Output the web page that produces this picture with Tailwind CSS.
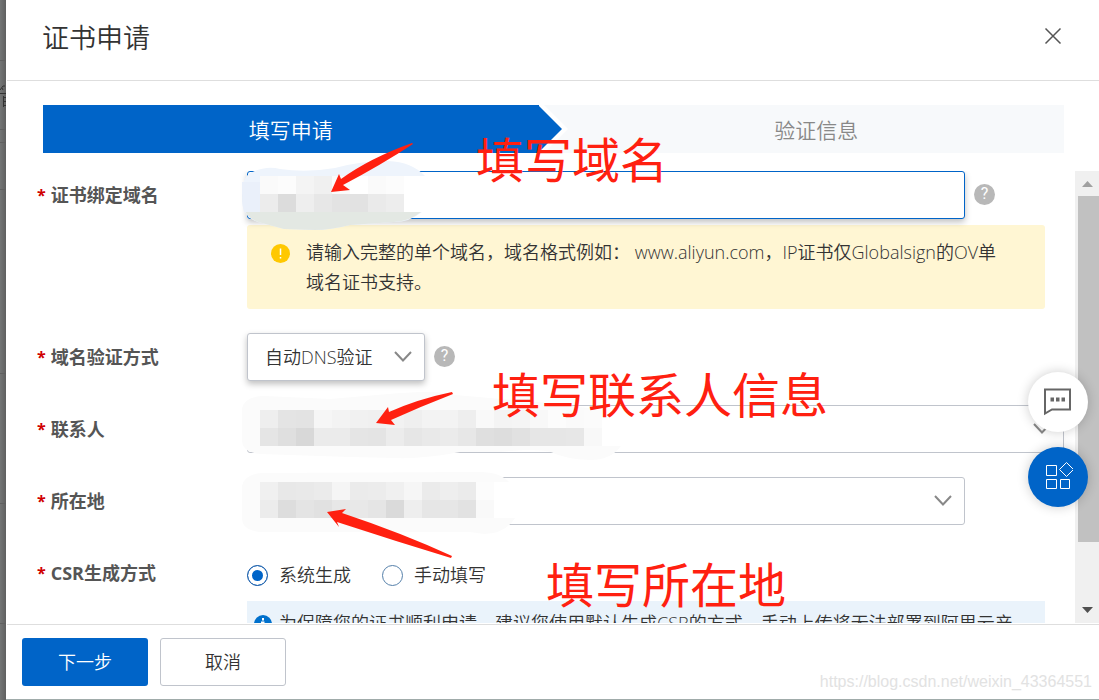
<!DOCTYPE html>
<html lang="zh-CN">
<head>
<meta charset="utf-8">
<title>证书申请</title>
<script src="https://cdn.jsdelivr.net/npm/@tailwindcss/browser@4"></script>
</head>
<body class="relative flex h-screen overflow-hidden bg-[#707272] font-['Open_Sans','Noto_Sans_CJK_SC',sans-serif] text-lg font-[350] text-[#333]">

<!-- dimmed page behind the dialog -->
<div class="relative w-1.5 shrink-0 overflow-hidden bg-linear-to-r from-[#737575] to-[#606060]" aria-hidden="true">
  <svg class="absolute inset-0" width="6" height="700" viewBox="0 0 6 700">
    <path d="M0 60.500H6M0 129.500H6M0 142.500H6M0 189.500H6M0 373.500H6M0 503.500H6M0 623.500H6" stroke="#606060" fill="none"/>
    <path d="M0 90L3 86L5 86M2 88L3 90M0 93.500H6M3.500 96V107M3 97.500H6M3 101.500H6M3 105.500H6" stroke="#333" fill="none"/>
  </svg>
</div>

<main class="relative flex min-w-0 flex-1 flex-col border-b border-[#a0abaa] bg-white" role="dialog" aria-labelledby="title">
  <header class="ml-px flex h-[81px] shrink-0 items-center justify-between border-b border-[#dedede] pr-9 pb-1 pl-[35px]">
    <h1 id="title" class="text-[27px] leading-9">证书申请</h1>
    <button type="button" aria-label="关闭" class="flex size-5 items-center justify-center pb-1">
      <svg class="size-[18px] shrink-0" viewBox="0 0 18 18" fill="none" stroke="#555" stroke-width="1.500"><path d="M1.500 1.500L16.500 16.500M16.500 1.500L1.500 16.500"/></svg>
    </button>
  </header>

  <ol class="mt-6 mr-[35px] mb-[18px] ml-[37px] flex h-12 shrink-0 text-[21px] leading-[50px]">
    <li class="relative flex-1 bg-[#0064c8] text-center text-white">填写申请
      <svg class="absolute top-0 left-full" width="30" height="48" viewBox="0 0 30 48" aria-hidden="true"><path d="M0 0H5L29 24L5 48H0Z" fill="#fff"/><path d="M-1 0H-1L23 24L-1 48H-1Z" fill="#0064c8"/></svg>
    </li>
    <li class="flex-1 bg-[#f7f9fb] pl-[30px] text-center text-[#888]">验证信息</li>
  </ol>

  <div class="flex min-h-0 flex-1">
    <form class="flex min-w-0 flex-1 flex-col gap-6 overflow-hidden pr-[11px] pl-[31px]">
      <div class="flex shrink-0">
        <label for="domain" class="flex h-12 w-[210px] shrink-0 items-center gap-[5px] font-bold text-[#555]"><span class="text-base text-[#d00000]">*</span>证书绑定域名</label>
        <div class="min-w-0 flex-1">
          <div class="flex items-center">
            <input id="domain" type="text" class="h-12 min-w-0 flex-1 rounded-[3px] border border-[#0064c8] bg-white px-4 shadow-[0_3px_6px_rgba(0,0,0,0.25)] outline-none">
            <div class="w-[99px] shrink-0 pb-0.5 pl-[9px]"><button type="button" aria-label="域名帮助" class="flex size-[21px] items-center justify-center rounded-full bg-[#b8b8b8] font-[Roboto] text-base font-normal text-white">?</button></div>
          </div>
          <div class="mt-1.5 mr-[19px] flex gap-4 rounded-[3px] bg-[#fff6d3] py-3 pr-9 pl-6">
            <svg class="mt-[7px] size-[19px] shrink-0" viewBox="0 0 19 19" aria-hidden="true"><circle cx="9.500" cy="9.500" r="9.500" fill="#ffc800"/><path d="M9.500 4.500V11M9.500 13V14.500" stroke="#fff" stroke-width="1.500"/></svg>
            <p class="leading-[30px]">请输入完整的单个域名，域名格式例如： www.aliyun.com，IP证书仅Globalsign的OV单域名证书支持。</p>
          </div>
        </div>
      </div>

      <div class="flex h-12 shrink-0 items-center">
        <label for="method" class="flex w-[210px] shrink-0 items-center gap-[5px] font-bold text-[#555]"><span class="text-base text-[#d00000]">*</span>域名验证方式</label>
        <div class="relative">
          <select id="method" class="block h-12 w-[178px] appearance-none rounded-[3px] border border-[#c0c4cc] bg-white pl-[17px] shadow-[0_3px_6px_rgba(0,0,0,0.25)]"><option>自动DNS验证</option></select>
          <svg class="pointer-events-none absolute top-[18px] right-[13px]" width="18" height="12" viewBox="0 0 18 12" fill="none" stroke="#888" stroke-width="2"><path d="M1 1L9 9.500L17 1"/></svg>
        </div>
        <div class="pb-0.5 pl-[9px]"><button type="button" aria-label="验证方式帮助" class="flex size-[21px] items-center justify-center rounded-full bg-[#b8b8b8] font-[Roboto] text-base font-normal text-white">?</button></div>
      </div>

      <div class="flex h-12 shrink-0 items-center">
        <label for="contact" class="flex w-[210px] shrink-0 items-center gap-[5px] font-bold text-[#555]"><span class="text-base text-[#d00000]">*</span>联系人</label>
        <div class="relative flex-1">
          <select id="contact" class="block h-12 w-full appearance-none rounded-[3px] border border-[#c0c4cc] bg-white"><option></option></select>
          <svg class="pointer-events-none absolute top-[18px] right-[13px]" width="18" height="12" viewBox="0 0 18 12" fill="none" stroke="#888" stroke-width="2"><path d="M1 1L9 9.500L17 1"/></svg>
        </div>
      </div>

      <div class="flex h-12 shrink-0 items-center">
        <label for="place" class="flex w-[210px] shrink-0 items-center gap-[5px] font-bold text-[#555]"><span class="text-base text-[#d00000]">*</span>所在地</label>
        <div class="relative mr-[99px] flex-1">
          <select id="place" class="block h-12 w-full appearance-none rounded-[3px] border border-[#c0c4cc] bg-white"><option></option></select>
          <svg class="pointer-events-none absolute top-[18px] right-[13px]" width="18" height="12" viewBox="0 0 18 12" fill="none" stroke="#888" stroke-width="2"><path d="M1 1L9 9.500L17 1"/></svg>
        </div>
      </div>

      <fieldset class="flex shrink-0" aria-labelledby="csr">
        <div id="csr" class="flex h-12 w-[210px] shrink-0 items-center gap-[5px] font-bold text-[#555]"><span class="text-base text-[#d00000]">*</span>CSR生成方式</div>
        <div class="min-w-0 flex-1">
          <div class="flex h-12 items-center gap-[31px] pt-1">
            <label class="flex items-center gap-[11px]"><input type="radio" name="csr" checked class="size-[21px] appearance-none rounded-full border border-[#1a5ba5] bg-white checked:bg-[#0064c8] checked:shadow-[inset_0_0_0_4px_#fff]">系统生成</label>
            <label class="flex items-center gap-[11px]"><input type="radio" name="csr" class="size-[21px] appearance-none rounded-full border border-[#5580aa] bg-white checked:bg-[#0064c8] checked:shadow-[inset_0_0_0_4px_#fff]">手动填写</label>
          </div>
          <div class="mt-1 mr-[19px] flex gap-[7px] bg-[#eaf3fb] py-[7px] pr-5 pl-[7px]">
            <svg class="mt-[7px] size-[18px] shrink-0" viewBox="0 0 18 18" aria-hidden="true"><circle cx="9" cy="9" r="9" fill="#0070cc"/><path d="M9 3V5.500M7 7.500H9.500V14M6.500 14H12" stroke="#fff" stroke-width="2" fill="none"/></svg>
            <p class="leading-[30px]">为保障您的证书顺利申请，建议您使用默认生成CSR的方式，手动上传将无法部署到阿里云产品。</p>
          </div>
        </div>
      </fieldset>
    </form>

    <!-- scroll bar -->
    <div class="flex w-6 shrink-0 flex-col items-center bg-[#f0f0f0]" aria-hidden="true">
      <svg class="h-[25px] w-6 shrink-0" viewBox="0 0 24 25"><path d="M7 16L12.500 10L18 16Z" fill="#a0a0a0"/></svg>
      <div class="ml-0.5 w-[21px] flex-[347] bg-[#c1c1c1]"></div>
      <div class="flex-[56]"></div>
      <svg class="h-[25px] w-6 shrink-0" viewBox="0 0 24 25"><path d="M7 9L12.500 15L18 9Z" fill="#505050"/></svg>
    </div>
  </div>

  <footer class="mt-px ml-px flex h-[75px] shrink-0 items-center gap-3 border-t border-[#dedede] pl-[15px]">
    <button type="button" class="h-12 w-[126px] rounded-[3px] bg-[#0064c8] text-white">下一步</button>
    <button type="button" class="h-12 w-[126px] rounded-[3px] border border-[#c0c4cc] bg-white">取消</button>
  </footer>
</main>

<!-- floating tools -->
<div class="absolute top-[372px] right-[11px] flex flex-col gap-[15px]">
  <button type="button" aria-label="咨询" class="flex size-[60px] items-center justify-center rounded-full bg-white shadow-[0_0_12px_rgba(0,0,0,0.2)]">
    <svg width="30" height="30" viewBox="0 0 30 30" fill="none" stroke="#666" stroke-width="2"><path d="M2 2.500H27V22.500H9L2 26.500Z"/><path d="M7.500 12.500H11M13 12.500H16.500M18.500 12.500H22" stroke-width="4"/></svg>
  </button>
  <button type="button" aria-label="应用" class="flex size-[60px] items-center justify-center rounded-full bg-[#0064c8] shadow-[0_0_12px_rgba(0,0,0,0.2)]">
    <svg width="30" height="30" viewBox="0 0 30 30" fill="none" stroke="#fff" stroke-width="1"><path d="M3.500 3.500H13.500V13.500H3.500ZM3.500 17.500H13.500V26.500H3.500ZM17.500 17.500H26.500V26.500H17.500ZM23.500 .5L30.500 7.500L23.500 14.500L16.500 7.500Z"/></svg>
  </button>
</div>

<!-- redaction mosaics and arrows -->
<svg class="pointer-events-none absolute top-0 left-0" width="700" height="600" viewBox="0 0 700 600" aria-hidden="true">
  <path d="M242 190Q243 178 250 173Q266 165 280 169Q306 173 335 168Q360 161 388 161Q412 162 425 176L422 212Q410 222 394 222L350 225Q330 230 315 230L284 229L262 223Q244 220 242 202Z" fill="#eef4fc"/>
  <path d="M243 203Q244 219 262 223L284 229L315 230Q330 230 350 225L394 222Q410 221 421 212H260V194H242Z" fill="#e3e8e3"/>
  <path d="M242 182H260V212H244Q242 206 242 190Z" fill="#eaf0fa"/>
  <path d="M404 176H427V212H404Z" fill="#fff"/>
  <path d="M242 409Q244 396 265 396L330 399L400 393Q440 390 455 395L560 404L602 410V446H621Q611 460 590 460Q565 459 551 452Q535 448 500 452L460 452Q425 459 395 458L350 457L260 454Q242 452 242 440Z" fill="#fbfbfb"/>
  <path d="M242 486Q245 473 265 473L480 472Q500 472 509 482H494V518H515Q505 534 484 534L470 532H262Q242 531 242 518Z" fill="#fbfbfb"/>
  <g id="mosaic" shape-rendering="crispEdges"></g>
  <g fill="#ff2010">
    <path d="M331 192L339 174L341 179Q370 158 412 143L413 144Q381 165 343 185L350 190Z"/>
    <path d="M376 423L388 407L389 412Q418 399 452 392L453 394Q422 406 391 420L395 425Z"/>
    <path d="M327 512L346 509L342 513Q402 533 452 556L451 558Q395 541 337 522L339 527Z"/>
  </g>
</svg>
<p class="pointer-events-none absolute top-[136px] left-[476px] text-[48px] leading-12 font-normal text-[#ff2010]">填写域名</p>
<p class="pointer-events-none absolute top-[371px] left-[492px] text-[48px] leading-12 font-normal text-[#ff2010]">填写联系人信息</p>
<p class="pointer-events-none absolute top-[561px] left-[546px] text-[48px] leading-12 font-normal text-[#ff2010]">填写所在地</p>
<p class="pointer-events-none absolute right-[7px] bottom-1.5 font-['Liberation_Sans',sans-serif] text-base font-normal text-[#e2e2e2]">https://blog.csdn.net/weixin_43364551</p>

<script>
  const cell = 18;
  const blocks = [
    { y: 176, rows: ["fa fc f4 f0 fb ff fa fc", "ec dc ee e7 e3 e2 ea ed"] },
    { y: 410, rows: ["ee e4 e3 f6 f3 f1 f0 f2 ef f3 f3 ee f9 f4 f5 f8 fc fa", "e5 df d8 eb eb e5 e4 ec e6 e9 eb e7 df dd e1 e6 e6 e7 f8"] },
    { y: 482, rows: ["f0 e8 e9 eb f5 eb ec f0 f6 eb ee eb fc", "ec dd e4 e1 e7 e8 e5 da ee e6 e6 e2 f9"] }
  ];
  const g = document.getElementById("mosaic");
  for (const { y, rows } of blocks) rows.forEach((row, r) => row.split(" ").forEach((v, c) => {
    const rect = document.createElementNS("http://www.w3.org/2000/svg", "rect");
    for (const [k, a] of Object.entries({ x: 260 + c * cell, y: y + r * cell, width: cell, height: cell, fill: "#" + v + v + v })) rect.setAttribute(k, a);
    g.append(rect);
  }));
</script>
</body>
</html>
